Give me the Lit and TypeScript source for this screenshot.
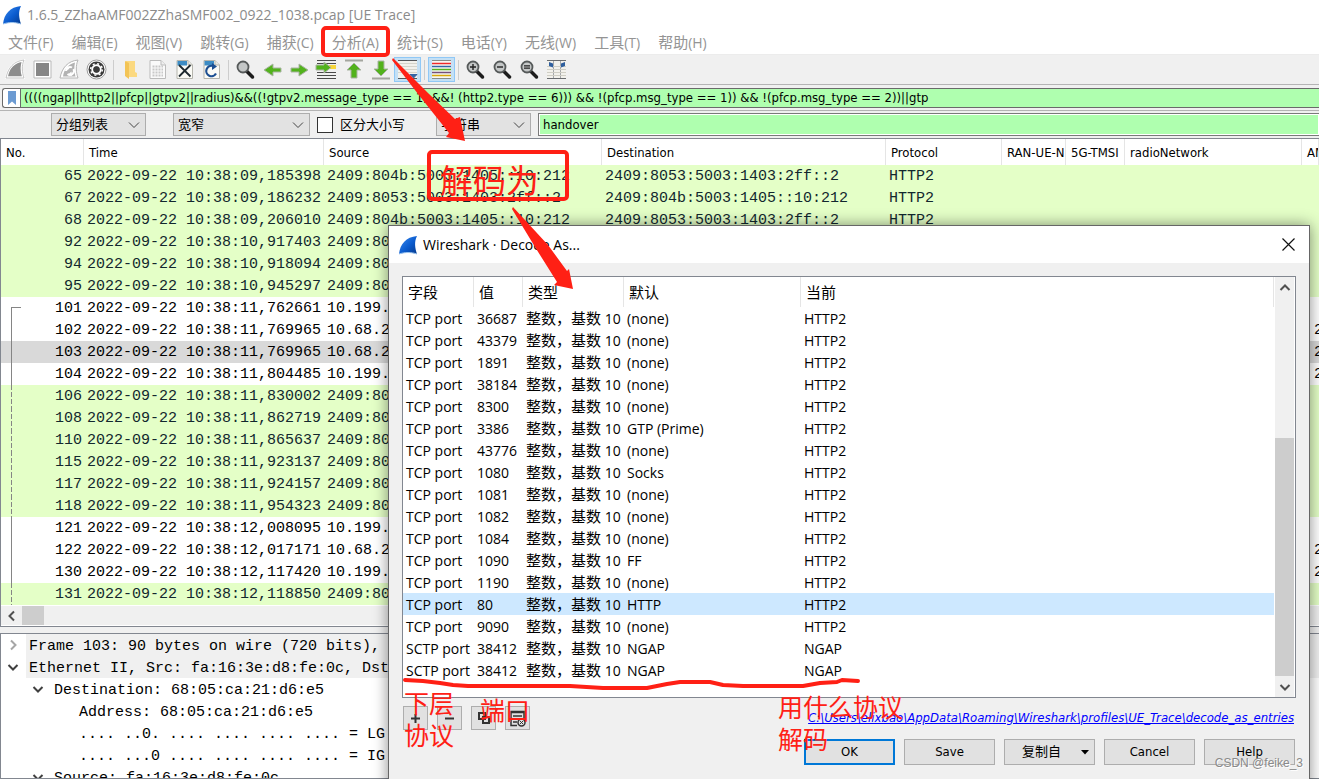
import { LitElement, html, css, svg, nothing } from "lit";
import { customElement } from "lit/decorators.js";

type Packet = { no: number; time: string; src: string; dst?: string; proto?: string; kind: "green" | "plain" | "sel"; link?: string; tail?: string };

const A = "2409:804b:5003:1405::10:212";
const B = "2409:8053:5003:1403:2ff::2";

const packets: Packet[] = [
  { no: 65, time: "2022-09-22 10:38:09,185398", src: A, dst: B, proto: "HTTP2", kind: "green" },
  { no: 67, time: "2022-09-22 10:38:09,186232", src: B, dst: A, proto: "HTTP2", kind: "green" },
  { no: 68, time: "2022-09-22 10:38:09,206010", src: A, dst: B, proto: "HTTP2", kind: "green" },
  { no: 92, time: "2022-09-22 10:38:10,917403", src: "2409:80", kind: "green" },
  { no: 94, time: "2022-09-22 10:38:10,918094", src: "2409:80", kind: "green" },
  { no: 95, time: "2022-09-22 10:38:10,945297", src: "2409:80", kind: "green" },
  { no: 101, time: "2022-09-22 10:38:11,762661", src: "10.199.", kind: "plain", link: "start" },
  { no: 102, time: "2022-09-22 10:38:11,769965", src: "10.68.2", kind: "plain", link: "solid", tail: "2" },
  { no: 103, time: "2022-09-22 10:38:11,769965", src: "10.68.2", kind: "sel", link: "solid", tail: "2" },
  { no: 104, time: "2022-09-22 10:38:11,804485", src: "10.199.", kind: "plain", link: "solid", tail: "2" },
  { no: 106, time: "2022-09-22 10:38:11,830002", src: "2409:80", kind: "green", link: "dash" },
  { no: 108, time: "2022-09-22 10:38:11,862719", src: "2409:80", kind: "green", link: "dash" },
  { no: 110, time: "2022-09-22 10:38:11,865637", src: "2409:80", kind: "green", link: "dash" },
  { no: 115, time: "2022-09-22 10:38:11,923137", src: "2409:80", kind: "green", link: "dash" },
  { no: 117, time: "2022-09-22 10:38:11,924157", src: "2409:80", kind: "green", link: "dash" },
  { no: 118, time: "2022-09-22 10:38:11,954323", src: "2409:80", kind: "green", link: "dash" },
  { no: 121, time: "2022-09-22 10:38:12,008095", src: "10.199.", kind: "plain", link: "solid" },
  { no: 122, time: "2022-09-22 10:38:12,017171", src: "10.68.2", kind: "plain", link: "solid", tail: "2" },
  { no: 130, time: "2022-09-22 10:38:12,117420", src: "10.199.", kind: "plain", link: "solid", tail: "2" },
  { no: 131, time: "2022-09-22 10:38:12,118850", src: "2409:80", kind: "green", link: "dash" },
];

const decodes: [string, string, string, string][] = [
  ["TCP port", "36687", "(none)", "HTTP2"],
  ["TCP port", "43379", "(none)", "HTTP2"],
  ["TCP port", "1891", "(none)", "HTTP2"],
  ["TCP port", "38184", "(none)", "HTTP2"],
  ["TCP port", "8300", "(none)", "HTTP2"],
  ["TCP port", "3386", "GTP (Prime)", "HTTP2"],
  ["TCP port", "43776", "(none)", "HTTP2"],
  ["TCP port", "1080", "Socks", "HTTP2"],
  ["TCP port", "1081", "(none)", "HTTP2"],
  ["TCP port", "1082", "(none)", "HTTP2"],
  ["TCP port", "1084", "(none)", "HTTP2"],
  ["TCP port", "1090", "FF", "HTTP2"],
  ["TCP port", "1190", "(none)", "HTTP2"],
  ["TCP port", "80", "HTTP", "HTTP2"],
  ["TCP port", "9090", "(none)", "HTTP2"],
  ["SCTP port", "38412", "NGAP", "NGAP"],
  ["SCTP port", "38412", "NGAP", "NGAP"],
];

const menus: [string, string][] = [
  ["文件", "(F)"], ["编辑", "(E)"], ["视图", "(V)"], ["跳转", "(G)"], ["捕获", "(C)"], ["分析", "(A)"],
  ["统计", "(S)"], ["电话", "(Y)"], ["无线", "(W)"], ["工具", "(T)"], ["帮助", "(H)"],
];

const fin = html`<svg class="fin" viewBox="0 0 20 20" width="20" height="20" aria-hidden="true">
  <defs><linearGradient id="f" x1="0" y1="0" x2="1" y2="1"><stop offset="0" stop-color="#3d8df0" /><stop offset=".55" stop-color="#0b5ccf" /><stop offset="1" stop-color="#063a8c" /></linearGradient></defs>
  <path d="M1 19C2 9 8 2 19 1C16 7 17 13 19 19C13 17 7 17 1 19Z" fill="url(#f)" />
  <path d="M1 19C7 17 13 17 19 19" fill="none" stroke="#9cc4ee" />
</svg>`;

const lines = (ys: number[], c: string, x1 = 2, x2 = 21) =>
  ys.map((y) => svg`<path d="M${x1} ${y}H${x2}" stroke="${c}" />`);

const page = svg`<path d="M4 2.500H15L19.500 7V20.500H4Z" fill="#fbfbf6" stroke="#b5b5ad" /><path d="M4.500 3H14V7.500H4.500Z" fill="#3d8cc4" /><path d="M15 2.500V7H19.500" fill="#e8e8e0" stroke="#b5b5ad" />`;
const lens = (inner: unknown) => svg`<path d="M12.500 13L18.500 19" stroke="#1d1d1d" stroke-width="3.500" stroke-linecap="round" /><circle cx="9" cy="9" r="5.500" fill="#c4c7c7" stroke="#565a5a" stroke-width="1.800" />${inner}`;
const arrowR = "M3 9H11V5L20 11L11 17V13H3Z";

const icons: Record<string, unknown> = {
  start: svg`<path d="M2.500 19.500C4 10 10 3.500 19.500 2.500C17 8 17.500 14 19.500 19.500Z" fill="#8d8d8d" stroke="#fff" stroke-width="2.500" /><path d="M2 20C4 9.500 10 3 20 2C17.500 8 18 14 20 20Z" fill="none" stroke="#b6b6b6" stroke-width=".8" />`,
  stop: svg`<path d="M3 3H20V20H3Z" fill="#fff" stroke="#b9b9b9" /><path d="M5 5H18V18H5Z" fill="#868686" />`,
  restart: svg`<path d="M2 20C4 9.500 10 3 20 2C17.500 8 18 14 20 20Z" fill="#fff" stroke="#b6b6b6" /><path d="M5 18.500C6 11 11 6 17 4.500C16 9 16 14 17.500 18.500Z" fill="#b3b3b3" /><path d="M8 13A4 4 0 0 1 14 9.500M15.500 11A4 4 0 0 1 9.500 16" fill="none" stroke="#fff" stroke-width="2" /><path d="M8 8L12 9.500L9.500 12.500ZM14 18L10.500 16L13.500 13.500Z" fill="#fff" />`,
  options: svg`<circle cx="11.500" cy="11.500" r="9.500" fill="#fff" stroke="#9d9d9d" /><circle cx="11.500" cy="11.500" r="8" fill="#3a3a3a" /><circle cx="11.500" cy="11.500" r="4.200" fill="none" stroke="#fff" stroke-width="2" /><circle cx="11.500" cy="11.500" r="5.800" fill="none" stroke="#fff" stroke-width="1.500" stroke-dasharray="2 2.550" /><circle cx="11.500" cy="11.500" r="3" fill="#3a3a3a" />`,
  open: svg`<path d="M7 3H16V14L18 15V19H8L6 17Z" fill="#fbd980" /><path d="M6 3L10 5V21L6 18Z" fill="#f3c456" />`,
  save: svg`<path d="M4 2.500H15L19.500 7V20.500H4Z" fill="#fafafa" stroke="#bbb" /><path d="M15 2.500V7H19.500" fill="#eee" stroke="#bbb" /><path d="M6.500 8.500H17M6.500 11.500H17M6.500 14.500H17M6.500 17.500H17" stroke="#c8c8c8" stroke-width="2" stroke-dasharray="2 1" />`,
  close: svg`${page}<path d="M6 7L17.500 18.500M17.500 7L6 18.500" stroke="#1f2a30" stroke-width="1.800" />`,
  reload: svg`${page}<path d="M16 15.500A5.200 5.200 0 1 1 13 8" fill="none" stroke="#1d4f91" stroke-width="2.200" /><path d="M12 5L17 8.500L12 12Z" fill="#1d4f91" />`,
  find: lens(nothing),
  back: svg`<g transform="translate(23 1) scale(-1 1)"><path d=${arrowR} fill="#52b21c" stroke="#a9b4a3" /></g>`,
  next: svg`<g transform="translate(0 1)"><path d=${arrowR} fill="#52b21c" stroke="#a9b4a3" /></g>`,
  goto: svg`${lines([2.5, 5.5, 8.5, 14.5, 17.5, 20.5], "#4a4a4a")}<path d="M14 7H21V11H14Z" fill="#f7d63b" /><path d="M1 7H9V4L16 9.500L9 15V12H1Z" fill="#52b21c" stroke="#a9b4a3" />`,
  first: svg`<path d="M3 2.500H21" stroke="#a4a69f" stroke-width="2" /><path d="M12 5L19 12H15V20H9V12H5Z" fill="#52b21c" stroke="#a9b4a3" />`,
  last: svg`<path d="M3 20.500H21" stroke="#a4a69f" stroke-width="2" /><path d="M12 18L19 11H15V3H9V11H5Z" fill="#52b21c" stroke="#a9b4a3" />`,
  autoscroll: svg`<path d="M2 2H21V21H2Z" fill="#f2f1ec" /><path d="M2 2.500H21M2 20.500H21" stroke="#54575a" /><path d="M2 5.500H21M2 8.500H21M2 11.500H21M2 14.500H21" stroke="#d5d4cb" /><path d="M14 16.500H21L17.500 20Z" stroke="#3465a4" fill="#3465a4" />`,
  color: svg`<path d="M2 2H21V21H2Z" fill="#f8f7f2" /><path d="M2 2.500H21M2 20.500H21" stroke="#8a8d88" /><g stroke-width="1.500">${lines([5.5], "#ef2929")}${lines([8.5], "#3465a4")}${lines([11.5], "#55b11f")}${lines([14.5], "#75507b")}${lines([17.5], "#d8a90a")}</g>`,
  zin: lens(svg`<path d="M6 9H12M9 6V12" stroke="#222" stroke-width="1.400" />`),
  zout: lens(svg`<path d="M6 9H12" stroke="#222" stroke-width="1.400" />`),
  zone: lens(svg`<path d="M6 7.800H12M6 10.200H12" stroke="#222" stroke-width="1.200" />`),
  cols: svg`<path d="M2 2H21V20H2Z" fill="#f2f1ec" /><path d="M2 2.500H21M2 20.500H21" stroke="#6a6d70" /><path d="M8.500 3V20M15.500 3V20" stroke="#a4a7aa" /><path d="M2 8.500H21M2 11.500H21M2 14.500H21M2 17.500H21" stroke="#cfcec5" /><path d="M4 4L8 5.500V9.500L4 8ZM16 5.500L20 4V8L16 9.500Z" fill="#2f5f9e" />`,
};

const tools: [string, string][] = [
  ["start", "开始"], ["stop", "停止"], ["restart", "重新开始"], ["options", "选项"], ["|", ""],
  ["open", "打开"], ["save", "保存"], ["close", "关闭"], ["reload", "重新加载"], ["|", ""],
  ["find", "查找"], ["back", "后退"], ["next", "前进"], ["goto", "转到"], ["first", "首个"], ["last", "最新"], ["autoscroll", "自动滚动"], ["|", ""],
  ["color", "着色"], ["|", ""], ["zin", "放大"], ["zout", "缩小"], ["zone", "原始大小"], ["cols", "调整列宽"],
];

const chev = (d: string, c = "#505050") =>
  html`<svg width="12" height="12" viewBox="0 0 12 12" aria-hidden="true"><path d=${d} fill="none" stroke=${c} stroke-width="2" /></svg>`;
const DOWN = "M1.500 4L6 8.500L10.500 4";
const UP = "M1.500 8L6 3.500L10.500 8";
const LEFT = "M8 1.500L3.500 6L8 10.500";
const RIGHT = "M4 1.500L8.500 6L4 10.500";

@customElement("app-root")
export class AppRoot extends LitElement {
  static styles = css`
    :host {
      --ui: "DejaVu Sans Condensed", "Noto Sans CJK SC", sans-serif;
      --seg: "Open Sans", "Noto Sans CJK SC", sans-serif;
      --mono: "Liberation Mono", monospace;
      display: flex;
      flex-direction: column;
      position: relative;
      height: 100vh;
      overflow: hidden;
      background: #f0f0f0;
      color: #000;
      font: 13px/16px var(--ui);
    }
    * { box-sizing: border-box; }
    button, input, select { font: inherit; color: inherit; margin: 0; border-radius: 0; }
    button { padding: 0; border: 0; background: none; }
    svg { display: block; flex: none; }
    table { border-collapse: separate; border-spacing: 0; table-layout: fixed; width: 100%; }
    th, td { padding: 0 3px; text-align: left; font-weight: 400; white-space: pre; overflow: hidden; }
    .cjk { font-size: 15px; line-height: 16px; }

    .title { display: flex; align-items: center; gap: 5px; height: 29px; padding-left: 2px; background: #fff; color: #8b8b8b; font: 14px/20px var(--seg); }
    .menu { display: flex; gap: 18px; height: 26px; padding-left: 8px; background: #fff; border-bottom: 1px solid #ececec; color: #949494; font: 14px/27px var(--seg); }
    .menu button { white-space: nowrap; }
    .toolbar { display: flex; align-items: center; height: 30px; padding: 0 2px; border-bottom: 1px solid #b4b4b4; }
    .tool { display: flex; align-items: center; justify-content: center; width: 27px; height: 25px; border: 1px solid transparent; }
    .tool.on { background: #c4e0f5; border-color: #90c8f6; }
    .sep { width: 1px; height: 20px; margin: 0 3px; background: #cdcdcd; }
    .filter { display: flex; height: 20px; margin: 3px 0 2px 2px; border: 1px solid #6a6a6a; border-right: 0; border-radius: 3px 0 0 3px; background: #fff; }
    .mark { display: flex; align-items: center; justify-content: center; width: 18px; border-right: 1px solid #6a6a6a; }
    .green { flex: 1; min-width: 0; border: 0; padding: 0 0 0 3px; background: #afffaf; outline: 0; }
    .find { display: flex; align-items: center; height: 28px; padding-left: 51px; border-top: 1px solid #b4b4b4; }
    .pick { display: flex; align-items: center; position: relative; }
    .pick select { width: 95px; height: 23px; padding: 0 4px; appearance: none; border: 1px solid #adadad; background: #e2e2e2; }
    .pick.wide { margin: 0 7px 0 27px; }
    .pick.wide select { width: 137px; }
    .pick svg { position: absolute; right: 6px; pointer-events: none; }
    .case { display: flex; align-items: center; gap: 7px; width: 119px; }
    .case input { appearance: none; width: 16px; height: 16px; border: 1px solid #333; background: #fff; }
    .find .green { height: 23px; margin-left: 7px; border: 1px solid #7a7a7a; border-right: 0; box-shadow: inset 0 0 0 1px #fff; padding-left: 4px; }

    .packets { border: 1px solid #828790; border-right: 0; background: #fff; }
    .packets th { height: 26px; padding: 2px 4px 0 5px; border-right: 1px solid #e5e5e5; font-family: var(--ui); }
    .packets td { height: 22px; padding-top: 1px; font: 15px/19px var(--mono); }
    .packets .g { background: #e4ffc7; color: #12272e; }
    .packets .s { background: #d9d9d9; }
    .packets .no { text-align: right; padding-right: 2px; }
    .packets .tail { padding-left: 12px; }
    .solid { background: linear-gradient(#858585, #858585) 10px 0 / 1px 100% no-repeat; }
    .start { background: linear-gradient(#858585, #858585) 10px 11px / 1px 11px no-repeat, linear-gradient(#858585, #858585) 10px 10px / 10px 1px no-repeat; }
    .dash { background: repeating-linear-gradient(#858585 0 5px, transparent 5px 7px) 10px 0 / 1px 100% no-repeat; }
    .hbar { display: flex; align-items: center; height: 21px; border-top: 1px solid #fff; border-bottom: 1px solid #fff; background: #f0f0f0; }
    .hbar button { display: flex; align-items: center; justify-content: center; width: 21px; }
    .thumb { background: #cdcdcd; }
    .hbar .thumb { width: 22px; height: 19px; }

    .detail { flex: 1; min-height: 0; margin-top: 6px; border: 1px solid #828790; border-right: 0; background: #fff; font: 15px/19px var(--mono); overflow: hidden; }
    .node { display: flex; height: 22px; }
    .node .tw { display: flex; align-items: center; justify-content: center; width: 25px; padding-right: 1px; }
    .node .txt { flex: 1; padding: 3px 0 0 3px; white-space: pre; }
    .node.band .txt { background: #f0f0f0; }
    .d1 { padding-left: 25px; }
    .d2 { padding-left: 50px; }

    .dialog { position: absolute; left: 388px; right: 9px; top: 225px; padding-bottom: 30px; border: 1px solid #666; background: #f0f0f0; box-shadow: 0 0 14px rgba(0, 0, 0, .45); }
    .dhead { display: flex; align-items: center; gap: 5px; height: 37px; padding: 0 14px 0 9px; background: #fff; font: 14px/20px var(--seg); }
    .dhead span { flex: 1; }
    .grid { display: flex; margin: 13px 13px 8px; border: 1px solid #828790; background: #fff; font: 14px/22px var(--seg); }
    .rows { flex: 1; min-width: 0; padding: 0 1px 16px 0; }
    .grid th { height: 30px; padding: 0 5px; border-right: 1px solid #e5e5e5; font-size: 15px; }
    .grid td { height: 22px; padding-top: 2px; line-height: 20px; }
    .grid .hot { background: #cde8ff; }
    .vbar { display: flex; flex-direction: column; width: 20px; padding-right: 1px; background: #f0f0f0; background-clip: content-box; }
    .vbar button { display: flex; align-items: center; justify-content: center; height: 21px; }
    .vbar .track { flex: 1; }
    .vbar .thumb { height: 238px; }
    .foot { display: flex; justify-content: space-between; align-items: center; margin: 0 15px 0 14px; }
    .minis { display: flex; gap: 9px; }
    .minis button { display: flex; align-items: center; justify-content: center; width: 25px; height: 24px; border: 1px solid #adadad; background: #e1e1e1; }
    .foot a { color: #00f; font-style: italic; }
    .acts { display: flex; justify-content: flex-end; gap: 9px; margin: 9px 14px 0; }
    .acts button { display: flex; align-items: center; justify-content: center; width: 91px; height: 26px; border: 1px solid #adadad; background: #e1e1e1; }
    .acts .ok { border: 2px solid #0078d7; }
    .acts .drop { justify-content: flex-end; gap: 20px; padding-right: 5px; }

    .ink { position: absolute; left: 0; top: 0; pointer-events: none; }
    .note { position: absolute; color: #ff2015; font: 25px/32px "Noto Sans CJK SC", sans-serif; white-space: nowrap; }
    .n1 { left: 440px; top: 156px; font-size: 33px; line-height: 46px; }
    .n2 { left: 404px; top: 686px; }
    .n3 { left: 480px; top: 693px; }
    .n4 { left: 778px; top: 690px; }
    .wm { position: absolute; right: 16px; bottom: 8px; color: #8a8a8a; font: 12px/16px "Liberation Sans", sans-serif; text-shadow: 1px 1px 0 #fff; }
  `;

  private pick(label: string, value: string, wide = false) {
    return html`<span class="pick ${wide ? "wide" : ""}">
      <select aria-label=${label}><option>${value}</option></select>
      <svg width="12" height="12" viewBox="0 0 12 12" aria-hidden="true"><path d="M1 3.500L6 8.500L11 3.500" fill="none" stroke="#444" /></svg>
    </span>`;
  }

  private node(depth: number, mark: string, text: string, band = false) {
    return html`<div class="node d${depth} ${band ? "band" : ""}">
      <span class="tw">${mark === "v" ? chev(DOWN, "#404040") : mark === ">" ? chev(RIGHT, "#a6a6a6") : nothing}</span><span class="txt">${text}</span>
    </div>`;
  }

  render() {
    return html`
      <div class="title">${fin}<span>1.6.5_ZZhaAMF002ZZhaSMF002_0922_1038.pcap [UE Trace]</span></div>
      <nav class="menu">${menus.map(([a, b]) => html`<button><span class="cjk">${a}</span>${b}</button>`)}</nav>
      <div class="toolbar">
        ${tools.map(([id, name]) => id === "|"
          ? html`<span class="sep"></span>`
          : html`<button class="tool ${id === "autoscroll" || id === "color" ? "on" : ""}" aria-label=${name}><svg width="23" height="23" viewBox="0 0 23 23">${icons[id]}</svg></button>`)}
      </div>
      <div class="filter">
        <button class="mark" aria-label="书签"><svg width="8" height="14" viewBox="0 0 8 14"><path d="M0 0H8V14L4 10.500L0 14Z" fill="#6c9bd2" /></svg></button>
        <input class="green" aria-label="显示过滤器" .value=${"((((ngap||http2||pfcp||gtpv2||radius)&&((!gtpv2.message_type == 1) &&! (http2.type == 6))) && !(pfcp.msg_type == 1)) && !(pfcp.msg_type == 2))||gtp"} />
      </div>
      <div class="find">
        ${this.pick("搜索范围", "分组列表")}
        ${this.pick("字符宽度", "宽窄", true)}
        <label class="case"><input type="checkbox" />区分大小写</label>
        ${this.pick("搜索类型", "字符串")}
        <input class="green" aria-label="搜索" .value=${"handover"} />
      </div>

      <div class="packets">
        <table>
          <colgroup><col style="width:83px" /><col style="width:240px" /><col style="width:278px" /><col style="width:284px" /><col style="width:116px" /><col style="width:64px" /><col style="width:59px" /><col style="width:177px" /><col /></colgroup>
          <thead><tr>${["No.", "Time", "Source", "Destination", "Protocol", "RAN-UE-N", "5G-TMSI", "radioNetwork", "AM"].map((h) => html`<th>${h}</th>`)}</tr></thead>
          <tbody>
            ${packets.map((p) => html`<tr class=${p.kind === "green" ? "g" : p.kind === "sel" ? "s" : ""}>
              <td class="no ${p.link ?? ""}">${p.no}</td><td>${p.time}</td><td>${p.src}</td><td>${p.dst ?? ""}</td><td>${p.proto ?? ""}</td><td></td><td></td><td></td><td class="tail">${p.tail ?? ""}</td>
            </tr>`)}
          </tbody>
        </table>
        <div class="hbar"><button aria-label="向左">${chev(LEFT)}</button><span class="thumb"></span></div>
      </div>

      <div class="detail">
        ${this.node(0, ">", "Frame 103: 90 bytes on wire (720 bits),", true)}
        ${this.node(0, "v", "Ethernet II, Src: fa:16:3e:d8:fe:0c, Dst", true)}
        ${this.node(1, "v", "Destination: 68:05:ca:21:d6:e5")}
        ${this.node(2, "", "Address: 68:05:ca:21:d6:e5")}
        ${this.node(2, "", ".... ..0. .... .... .... .... = LG")}
        ${this.node(2, "", ".... ...0 .... .... .... .... = IG")}
        ${this.node(1, "v", "Source: fa:16:3e:d8:fe:0c")}
      </div>

      <section class="dialog" role="dialog" aria-label="Decode As">
        <div class="dhead">${fin}<span>Wireshark · Decode As...</span>
          <button aria-label="关闭"><svg width="13" height="13" viewBox="0 0 13 13"><path d="M.5 .5L12.500 12.500M12.500 .5L.5 12.500" stroke="#111" stroke-width="1.200" /></svg></button>
        </div>
        <div class="grid">
          <div class="rows">
            <table>
              <colgroup><col style="width:71px" /><col style="width:49px" /><col style="width:101px" /><col style="width:177px" /><col /></colgroup>
              <thead><tr>${["字段", "值", "类型", "默认", "当前"].map((h) => html`<th>${h}</th>`)}</tr></thead>
              <tbody>
                ${decodes.map(([f, v, d, c], i) => html`<tr class=${i === 13 ? "hot" : ""}><td>${f}</td><td>${v}</td><td><span class="cjk">整数，基数</span> 10</td><td>${d}</td><td>${c}</td></tr>`)}
              </tbody>
            </table>
          </div>
          <div class="vbar">
            <button aria-label="向上">${chev(UP)}</button><span class="track"></span><span class="thumb"></span><button aria-label="向下">${chev(DOWN)}</button>
          </div>
        </div>
        <div class="foot">
          <div class="minis">
            <button aria-label="添加"><svg width="9" height="9" viewBox="0 0 9 9"><path d="M0 4.500H9M4.500 0V9" stroke="#333" stroke-width="2" /></svg></button>
            <button aria-label="删除"><svg width="9" height="9" viewBox="0 0 9 9"><path d="M0 4.500H9" stroke="#333" stroke-width="2" /></svg></button>
            <button aria-label="复制"><svg width="12" height="12" viewBox="0 0 12 12"><path d="M1 1H7V7H1ZM5 5H11V11H5Z" fill="none" stroke="#333" stroke-width="2" /></svg></button>
            <button aria-label="清除"><svg width="17" height="17" viewBox="0 0 17 17"><path d="M8 15.500H2V1.500H15V8" fill="none" stroke="#333" stroke-width="1.500" /><path d="M2 2.500H15M4 6H13M4 9H10M4 12H8" stroke="#333" stroke-width="1.500" /><circle cx="12.500" cy="12.500" r="3.500" fill="none" stroke="#333" stroke-width="1.500" /><path d="M11 11L14 14M14 11L11 14" stroke="#333" /></svg></button>
          </div>
          <a href="#">C:\\Users\\elixbao\\AppData\\Roaming\\Wireshark\\profiles\\UE_Trace\\decode_as_entries</a>
        </div>
        <div class="acts">
          <button class="ok">OK</button><button>Save</button>
          <button class="drop">复制自<svg width="8" height="5" viewBox="0 0 8 5"><path d="M0 0H8L4 4.500Z" fill="#000" /></svg></button>
          <button>Cancel</button><button>Help</button>
        </div>
      </section>

      <svg class="ink" width="900" height="700" viewBox="0 0 900 700" aria-hidden="true">
        <g fill="none" stroke="#ff2015" stroke-width="4" stroke-linecap="round" stroke-linejoin="round">
          <rect x="323" y="28" width="65" height="27" rx="3" />
          <rect x="429" y="152" width="138" height="47" rx="3" />
          <path d="M405 680L423 681L440 683L453 685L468 686H570L603 688H647L667 684L680 682H710L723 685L743 686H803L820 683L837 682L842 680L858 681" />
        </g>
        <path d="M393 58L428 93L455 119L460 117L465 141L446 137L449 133L418 94L392 60ZM513 207L548 245L567 271L569 269L573 289L554 285L557 282L535 247L512 209Z" fill="#ff2015" />
      </svg>
      <div class="note n1">解码为</div>
      <div class="note n2">下层<br />协议</div>
      <div class="note n3">端口</div>
      <div class="note n4">用什么协议<br />解码</div>
      <div class="wm">CSDN @feike_3</div>
    `;
  }
}
